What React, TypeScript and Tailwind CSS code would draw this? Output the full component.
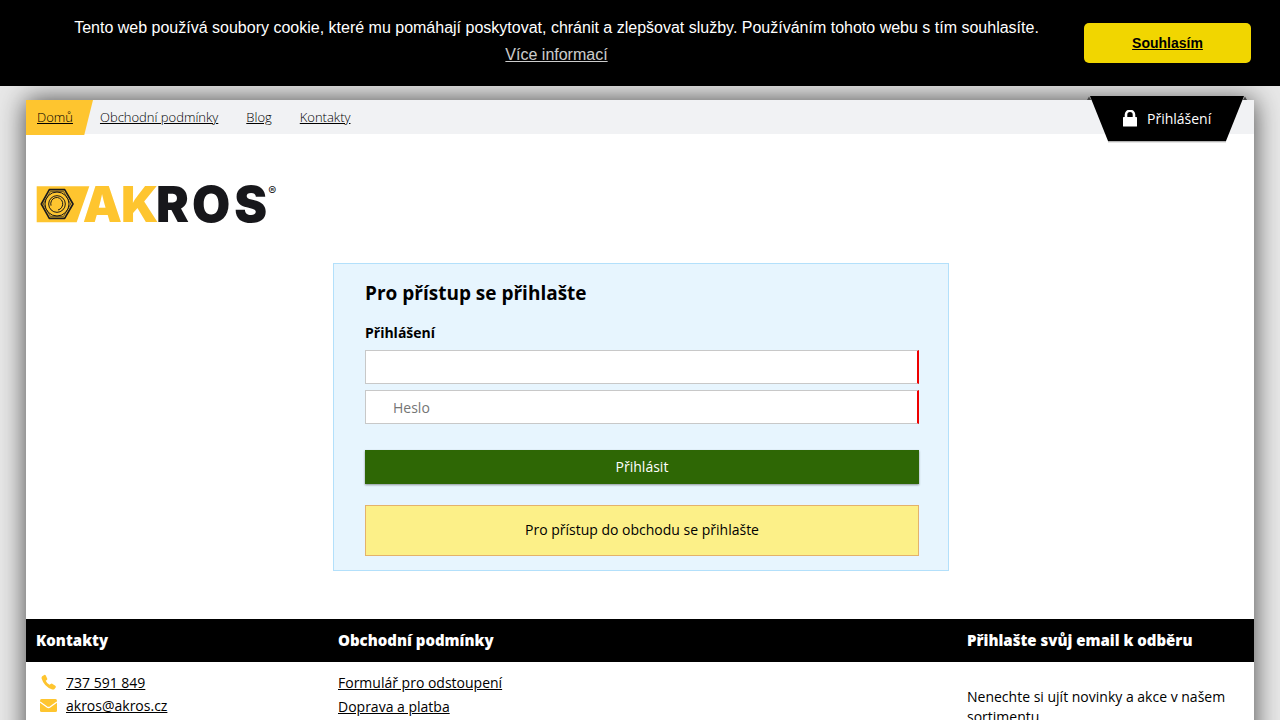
import type { ReactNode } from "react";

const navLinks = ["Obchodní podmínky", "Blog", "Kontakty"];

function CookieBar() {
  return (
    <div className="flex items-center bg-black px-[29px] py-[14px] font-['Liberation_Sans',sans-serif] text-base leading-[27px] text-white">
      <p className="flex-1 pb-1 text-center">
        Tento web používá soubory cookie, které mu pomáhají poskytovat, chránit a zlepšovat služby. Používáním tohoto webu s tím souhlasíte.{" "}
        <a href="#cookies" className="inline-block underline opacity-80">
          Více informací
        </a>
      </p>
      <button type="button" className="h-10 w-[167px] rounded-[5px] bg-[#f1d600] text-sm font-bold text-black underline">
        Souhlasím
      </button>
    </div>
  );
}

function LoginTab() {
  return (
    <a href="#login" className="absolute -top-1 right-[7px] flex h-[45px] w-[160px] items-center pl-9 text-sm text-white">
      <svg className="absolute inset-0 h-[48px] w-[160px]" viewBox="0 0 160 48" aria-hidden="true">
        <path d="M0 4 L2 0.5 L4 4Z M156 4 L158 0.5 L160 4Z" fill="#444" />
        <path d="M21 45.5 H139" stroke="#000" strokeOpacity="0.3" strokeWidth="1" />
        <path d="M21 46.5 H139" stroke="#000" strokeOpacity="0.1" strokeWidth="1" />
        <path d="M3 0 H157 L139 45 H21Z" fill="#000" />
      </svg>
      <svg className="relative mr-[10px] h-[17px] w-[14px]" viewBox="0 0 14 17" aria-hidden="true">
        <path d="M3 8 V4.8 A4 4 0 0 1 11 4.8 V8" fill="none" stroke="#fff" strokeWidth="2.6" />
        <rect x="0" y="7" width="14" height="9.5" rx="0.6" fill="#fff" />
      </svg>
      <span className="relative">Přihlášení</span>
    </a>
  );
}

function Logo() {
  return (
    <svg className="h-[60px] w-[260px]" viewBox="0 0 780 180" role="img" aria-label="AKROS">
      <path d="M32 34 H190 L152 142 H32Z" fill="#fec52f" />
      <g fill="none" stroke="#1b1a1c">
        <path d="M70 44 H116 L141 87 L116 130 H70 L46 87Z" strokeWidth="5" strokeLinejoin="round" />
        <path d="M73 50 H113 L134 87 L113 124 H73 L52 87Z" strokeWidth="2" />
        <circle cx="93" cy="87" r="36" strokeWidth="3" />
        <circle cx="93" cy="87" r="25" strokeWidth="3" />
        <path d="M75 92 A18 19 0 1 1 96 105" strokeWidth="3" />
      </g>
      <g fontFamily="Inter, sans-serif" fontWeight="900" fontSize="148">
        <text x="170" y="142" fill="#fec52f">
          A<tspan x="285">K</tspan>
        </text>
        <text x="390" y="142" fill="#17171b">
          R<tspan x="498">O</tspan>
          <tspan x="625">S</tspan>
        </text>
      </g>
      <text x="727" y="60" fontFamily="Inter, sans-serif" fontSize="36" fill="#17171b">
        ®
      </text>
    </svg>
  );
}

function FooterColumn({ title, children }: { title: string; children: ReactNode }) {
  return (
    <section>
      <h2 className="bg-black py-[11px] pl-[10px] text-[15px] leading-[21px] font-extrabold text-white">{title}</h2>
      <div className="px-[10px] pt-[9px] pb-6">{children}</div>
    </section>
  );
}

export default function App() {
  const field =
    "h-[34px] w-full border border-r-2 border-[#c8c8c8] border-r-[#ee0000] bg-white pl-[27px] text-sm placeholder:text-[#757575] outline-none";
  return (
    <div className="min-h-screen overflow-hidden bg-[#e8e8e8] font-['Open_Sans',sans-serif] text-sm text-black">
      <div className="relative z-10">
        <CookieBar />
      </div>
      <div className="relative mx-[26px] mt-[14px] bg-white shadow-[0_0_25px_rgba(0,0,0,0.7)]">
        <header>
          <nav className="flex h-[34px] items-start bg-[#f1f2f4] text-[13px] leading-[35px] font-light">
            <a href="#home" className="bg-[#fec52f] pr-5 pl-[11px] underline [clip-path:polygon(0_0,100%_0,87%_100%,0_100%)]">
              Domů
            </a>
            {navLinks.map((label) => (
              <a key={label} href="#nav" className="pr-[21px] pl-[7px] underline">
                {label}
              </a>
            ))}
          </nav>
          <LoginTab />
          <a href="#home" className="mt-[41px] block w-[260px]">
            <Logo />
          </a>
        </header>

        <main className="pt-7 pb-12 pl-0.5">
          <form className="mx-auto w-[616px] max-w-full border border-[#b3e0fb] bg-[#e7f5fe] pt-[14px] pr-[29px] pb-[14px] pl-[31px]">
            <h1 className="text-[19px] leading-[30px] font-bold">Pro přístup se přihlašte</h1>
            <label htmlFor="user" className="mt-[15px] mb-[7px] block leading-5 font-bold">
              Přihlášení
            </label>
            <div className="flex flex-col gap-[6px]">
              <input id="user" type="text" className={field} />
              <input id="password" type="password" aria-label="Heslo" placeholder="Heslo" className={field} />
            </div>
            <button type="submit" className="mt-[26px] h-[34px] w-full bg-[#2e6705] text-white shadow-[0_1px_2px_rgba(0,0,0,0.4)]">
              Přihlásit
            </button>
            <p className="mt-[21px] border border-[#e4b26b] bg-[#fcf088] pt-3 pb-[14px] text-center leading-[23px]">
              Pro přístup do obchodu se přihlašte
            </p>
          </form>
        </main>

        <footer className="grid grid-cols-[302fr_629fr_297fr]">
          <FooterColumn title="Kontakty">
            <ul className="leading-[23px]">
              <li className="flex items-center">
                <svg className="mr-[9px] ml-1 h-[17px] w-[17px]" viewBox="0 0 17 17" aria-hidden="true">
                  <path
                    d="M2.2 2.2 L4.3 0.9 Q5.3 0.7 5.8 1.6 L7.3 4.7 Q7.4 5.5 6.8 5.9 L5.7 6.8 Q6.8 9.3 9.5 10.8 L10.7 9.9 Q11.5 9.4 12.2 9.8 L15.3 11.8 Q16.2 12.5 15.7 13.4 L14.5 15 Q13.6 15.8 12.2 15.4 Q4.2 13 1.6 4.5 Q1.3 2.9 2.2 2.2Z"
                    fill="#fec52f"
                  />
                </svg>
                <a href="tel:737591849" className="underline">737 591 849</a>
              </li>
              <li className="flex items-center">
                <svg className="mr-[9px] ml-1 h-[17px] w-[17px]" viewBox="0 0 17 17" aria-hidden="true">
                  <rect x="0" y="2" width="17" height="13" rx="1.5" fill="#fec52f" />
                  <path d="M0 5 L7 10 Q8.5 11 10 10 L17 5" fill="none" stroke="#fff" strokeWidth="1.3" />
                </svg>
                <a href="mailto:akros@akros.cz" className="underline">akros@akros.cz</a>
              </li>
            </ul>
          </FooterColumn>
          <FooterColumn title="Obchodní podmínky">
            <ul className="leading-6">
              <li>
                <a href="#withdrawal" className="underline">Formulář pro odstoupení</a>
              </li>
              <li>
                <a href="#shipping" className="underline">Doprava a platba</a>
              </li>
            </ul>
          </FooterColumn>
          <FooterColumn title="Přihlašte svůj email k odběru">
            <p className="pt-4 leading-5">Nenechte si ujít novinky a akce v našem sortimentu</p>
          </FooterColumn>
        </footer>
      </div>
    </div>
  );
}
